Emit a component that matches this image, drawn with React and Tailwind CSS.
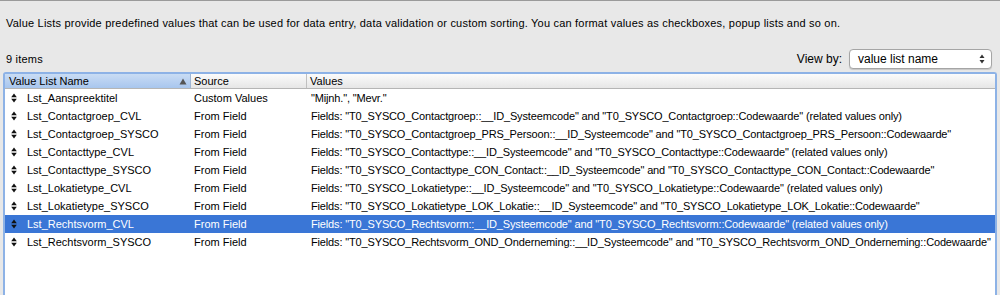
import React from "react";

const rows = [
  ["Lst_Aanspreektitel", "Custom Values", "\"Mijnh.\", \"Mevr.\""],
  ["Lst_Contactgroep_CVL", "From Field", "Fields: \"T0_SYSCO_Contactgroep::__ID_Systeemcode\" and \"T0_SYSCO_Contactgroep::Codewaarde\" (related values only)"],
  ["Lst_Contactgroep_SYSCO", "From Field", "Fields: \"T0_SYSCO_Contactgroep_PRS_Persoon::__ID_Systeemcode\" and \"T0_SYSCO_Contactgroep_PRS_Persoon::Codewaarde\""],
  ["Lst_Contacttype_CVL", "From Field", "Fields: \"T0_SYSCO_Contacttype::__ID_Systeemcode\" and \"T0_SYSCO_Contacttype::Codewaarde\" (related values only)"],
  ["Lst_Contacttype_SYSCO", "From Field", "Fields: \"T0_SYSCO_Contacttype_CON_Contact::__ID_Systeemcode\" and \"T0_SYSCO_Contacttype_CON_Contact::Codewaarde\""],
  ["Lst_Lokatietype_CVL", "From Field", "Fields: \"T0_SYSCO_Lokatietype::__ID_Systeemcode\" and \"T0_SYSCO_Lokatietype::Codewaarde\" (related values only)"],
  ["Lst_Lokatietype_SYSCO", "From Field", "Fields: \"T0_SYSCO_Lokatietype_LOK_Lokatie::__ID_Systeemcode\" and \"T0_SYSCO_Lokatietype_LOK_Lokatie::Codewaarde\""],
  ["Lst_Rechtsvorm_CVL", "From Field", "Fields: \"T0_SYSCO_Rechtsvorm::__ID_Systeemcode\" and \"T0_SYSCO_Rechtsvorm::Codewaarde\" (related values only)"],
  ["Lst_Rechtsvorm_SYSCO", "From Field", "Fields: \"T0_SYSCO_Rechtsvorm_OND_Onderneming::__ID_Systeemcode\" and \"T0_SYSCO_Rechtsvorm_OND_Onderneming::Codewaarde\""],
];

function Handle() {
  return (
    <svg width="6" height="10" viewBox="0 0 6 10" className="shrink-0">
      <path d="M3 0.5 L5.8 4.2 L0.2 4.2 Z" fill="#111111" />
      <path d="M3 9.5 L5.8 5.8 L0.2 5.8 Z" fill="#111111" />
    </svg>
  );
}

export default function App() {
  return (
    <div
      className="w-[1000px] h-[295px] bg-[#e8e8e8] border-t border-[#9a9a9a] text-[11px] text-black overflow-hidden flex flex-col"
      style={{ fontFamily: '"Liberation Sans", Arial, sans-serif' }}
    >
      <div className="pl-[6px] pt-[15px] h-[38px] leading-[14px] text-[11px] tracking-[0.2px]">
        Value Lists provide predefined values that can be used for data entry, data validation or custom sorting. You can format values as checkboxes, popup lists and so on.
      </div>
      <div className="flex items-end justify-between pl-[6px] pr-[8px] h-[33px] pb-[3px]">
        <div className="leading-[14px] pb-[3px] text-[11px] tracking-[0.2px]">9 items</div>
        <div className="flex items-center gap-[7px]">
          <span className="text-[12px]">View by:</span>
          <div className="w-[143px] h-[20px] bg-white border border-[#a5a5a5] rounded-[4px] shadow-[0_1px_1px_rgba(0,0,0,0.15)] flex items-center justify-between pl-[8px] pr-[6px] text-[12px]">
            <span>value list name</span>
            <svg width="6" height="10" viewBox="0 0 6 10">
              <path d="M3 0.5 L5.5 4 L0.5 4 Z" fill="#333" />
              <path d="M3 9.5 L5.5 6 L0.5 6 Z" fill="#333" />
            </svg>
          </div>
        </div>
      </div>
      <div className="mx-[3px] flex-1 border-[2px] border-b-0 border-[#8db2e6] rounded-t-[3px] flex flex-col bg-white">
        <div className="flex h-[15px] border-b border-[#b5b5b5] bg-gradient-to-b from-[#fbfbfb] to-[#e6e6e6] leading-[14px]">
          <div className="w-[186px] flex items-center justify-between pl-[4px] pr-[3px] bg-gradient-to-b from-[#c9dcf4] to-[#a8c6ee] border-r border-[#9fb6d4]">
            <span>Value List Name</span>
            <svg width="8" height="7" viewBox="0 0 8 7">
              <path d="M4 0.5 L7.5 6.5 L0.5 6.5 Z" fill="#555" />
            </svg>
          </div>
          <div className="w-[116px] pl-[3px] border-r border-[#c0c0c0]">Source</div>
          <div className="flex-1 pl-[3px]">Values</div>
        </div>
        <div>
          {rows.map((r, i) => {
            const sel = i === 7;
            return (
              <div
                key={i}
                className={`flex items-center h-[18px] leading-[18px] whitespace-nowrap ${sel ? "bg-[#3a76d6] text-white" : ""}`}
              >
                <div className="w-[186px] flex items-center pl-[6px] gap-[10px]">
                  <Handle />
                  <span>{r[0]}</span>
                </div>
                <div className="w-[117px] pl-[3px]">{r[1]}</div>
                <div className="flex-1 pl-[3px] overflow-hidden tracking-[-0.15px]">{r[2]}</div>
              </div>
            );
          })}
        </div>
      </div>
    </div>
  );
}
